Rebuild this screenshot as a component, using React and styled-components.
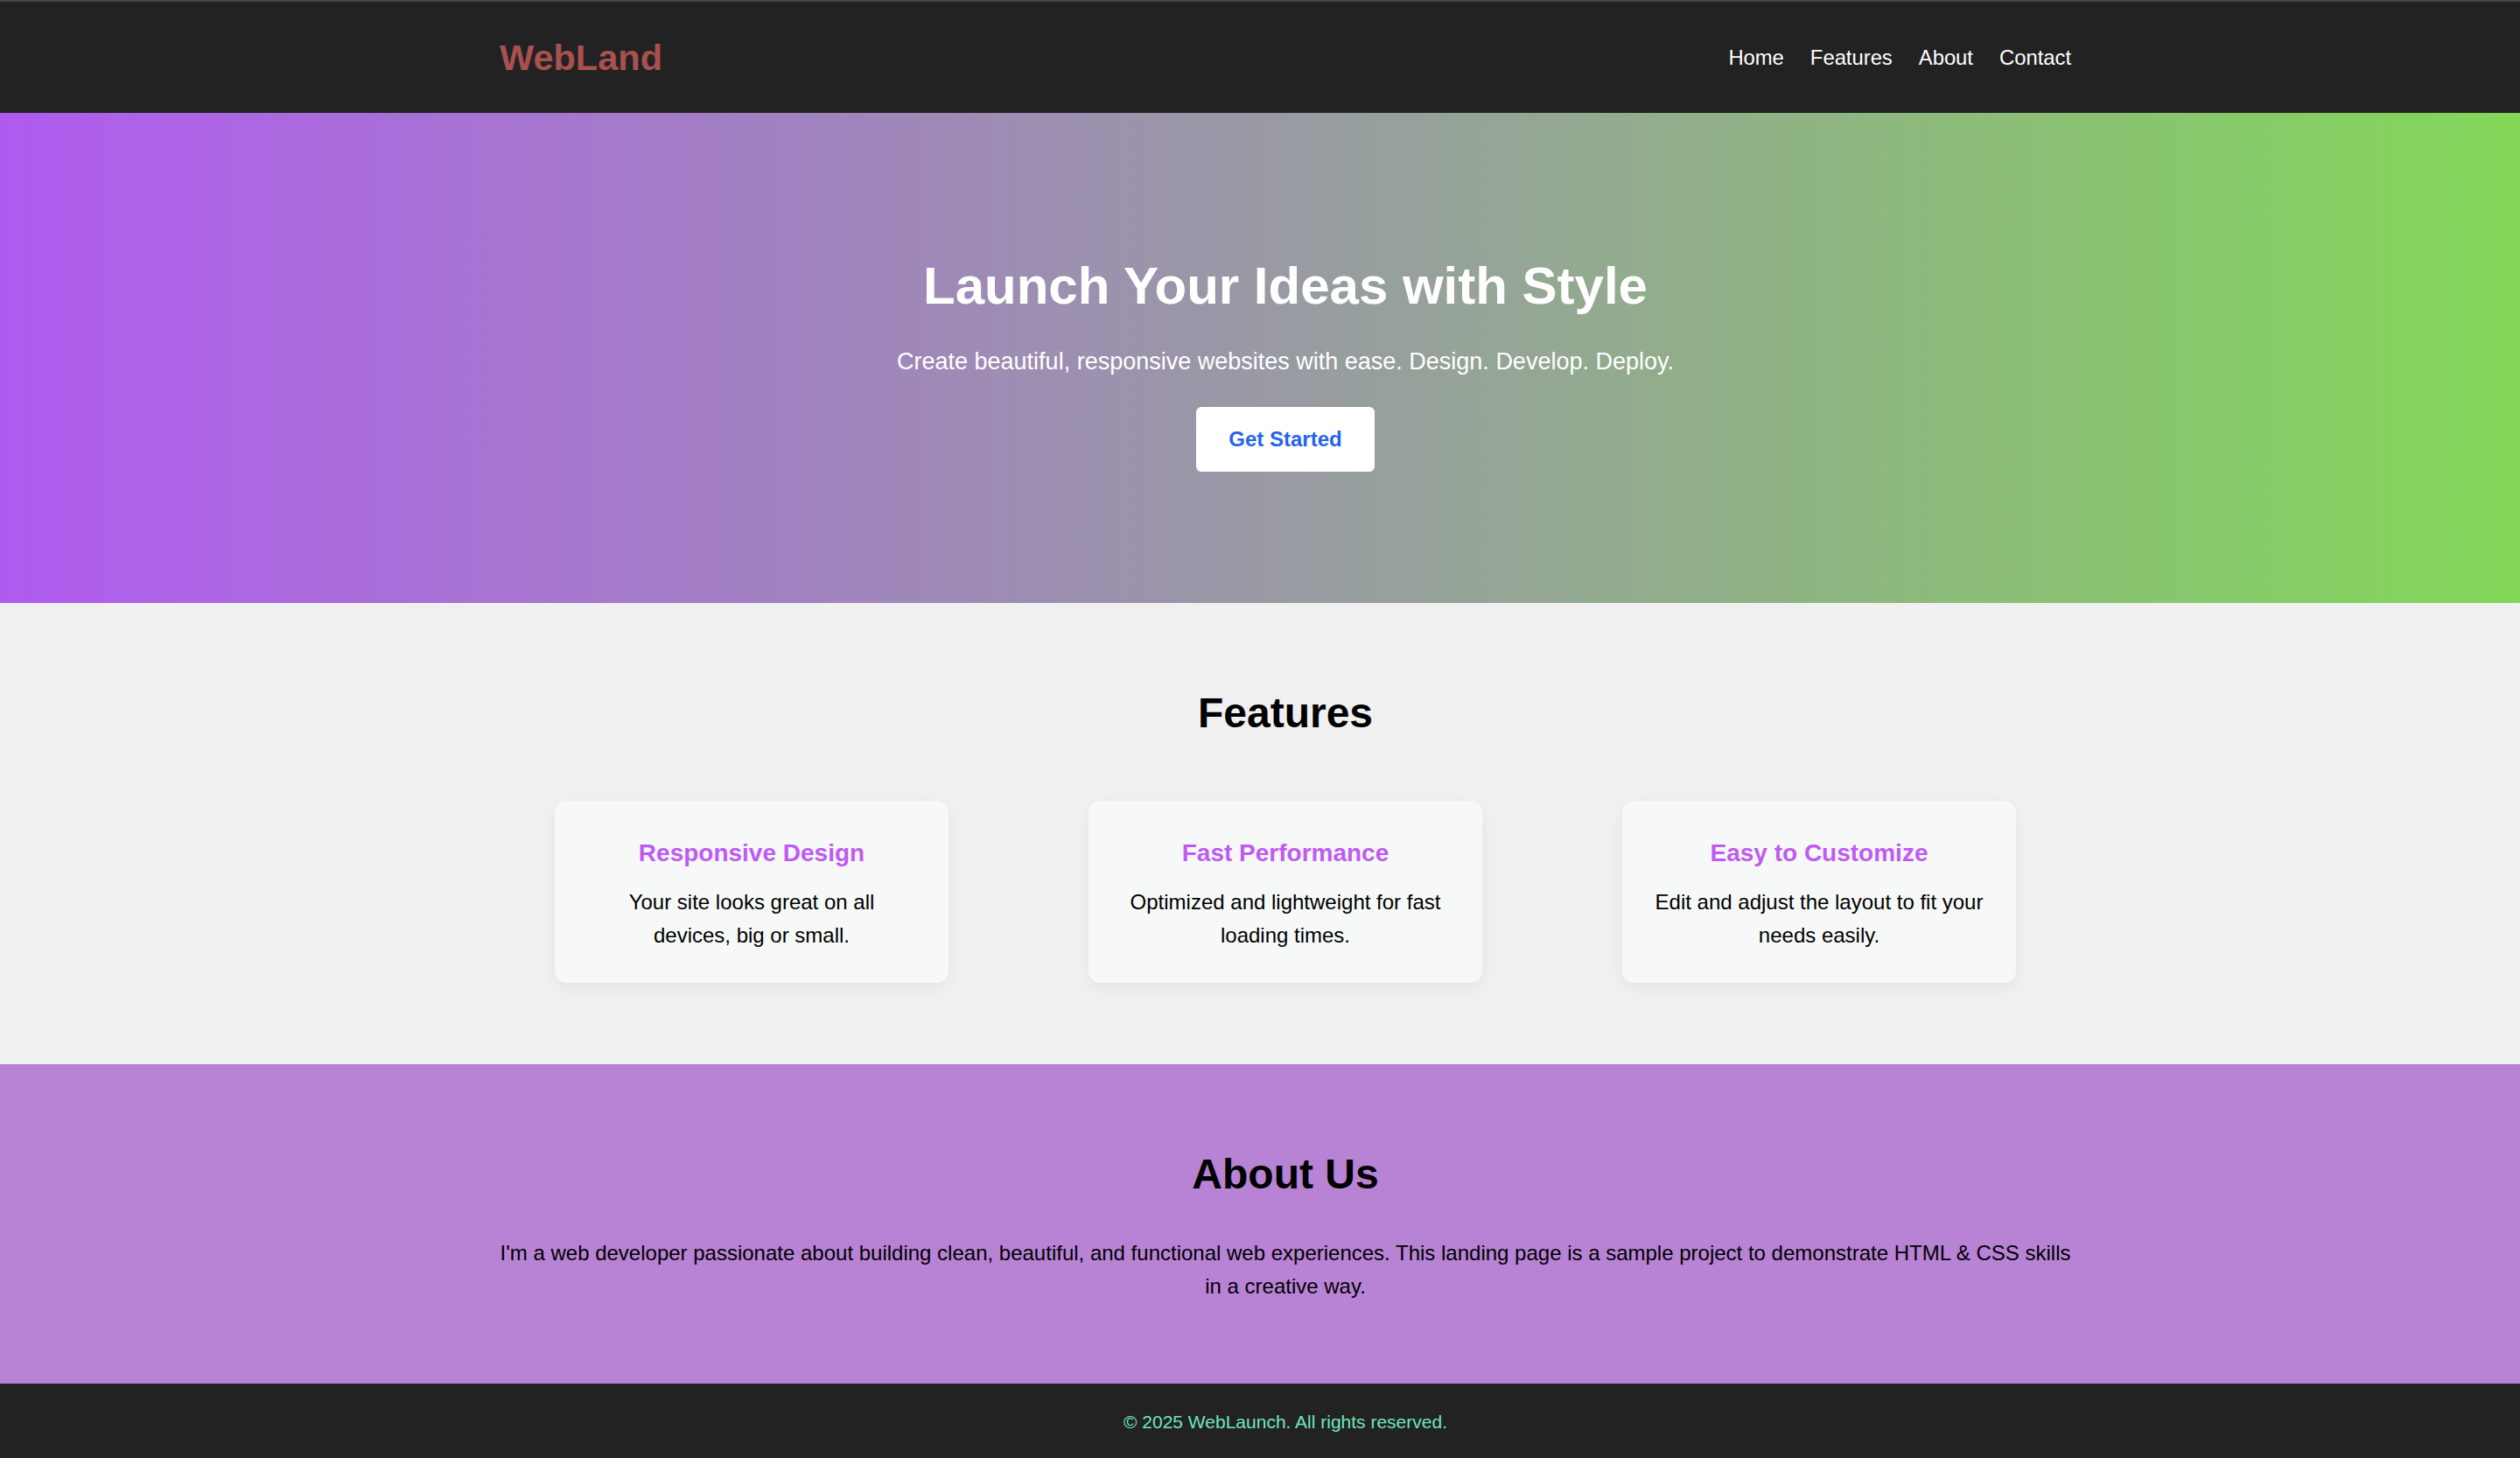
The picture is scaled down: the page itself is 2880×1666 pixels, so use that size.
import React from "react";
import styled, { createGlobalStyle } from "styled-components";

const GlobalStyle = createGlobalStyle`
  html, body {
    margin: 0;
    padding: 0;
    overflow-x: hidden;
  }
  body {
    font-family: "Liberation Sans", Arial, Helvetica, sans-serif;
    color: #000;
    background: #f0f0f0;
  }
  * {
    box-sizing: border-box;
  }
`;

// lines are kept as in the design so the wrap matches
const features = [
  {
    title: "Responsive Design",
    lines: ["Your site looks great on all", "devices, big or small."],
  },
  {
    title: "Fast Performance",
    lines: ["Optimized and lightweight for fast", "loading times."],
  },
  {
    title: "Easy to Customize",
    lines: ["Edit and adjust the layout to fit your", "needs easily."],
  },
];

const navLinks = ["Home", "Features", "About", "Contact"];

const App = () => {
  return (
    <Page>
      <GlobalStyle />
      <Header>
        <Container>
          <Bar>
            <Logo>WebLand</Logo>
            <NavList>
              {navLinks.map(link => (
                <li key={link}>
                  <NavLink href={`#${link.toLowerCase()}`}>{link}</NavLink>
                </li>
              ))}
            </NavList>
          </Bar>
        </Container>
      </Header>

      <Hero id="home">
        <HeroTitle>Launch Your Ideas with Style</HeroTitle>
        <HeroText>
          Create beautiful, responsive websites with ease. Design. Develop.
          Deploy.
        </HeroText>
        <CtaButton href="#features">Get Started</CtaButton>
      </Hero>

      <FeaturesSection id="features">
        <SectionTitle $gap={73}>Features</SectionTitle>
        <CardRow>
          {features.map(f => (
            <Card key={f.title}>
              <CardTitle>{f.title}</CardTitle>
              <CardText>
                {f.lines.map(line => (
                  <span key={line}>{line} </span>
                ))}
              </CardText>
            </Card>
          ))}
        </CardRow>
      </FeaturesSection>

      <AboutSection id="about">
        <Container>
          <SectionTitle $gap={44}>About Us</SectionTitle>
          <AboutText>
            I'm a web developer passionate about building clean, beautiful, and
            functional web experiences. This landing page is a sample project to
            demonstrate HTML &amp; CSS skills in a creative way.
          </AboutText>
        </Container>
      </AboutSection>

      <Footer id="contact">
        <p>&copy; 2025 WebLaunch. All rights reserved.</p>
      </Footer>
    </Page>
  );
};

export default App;

const Page = styled.div`
  width: 2938px;
`;

const Container = styled.div`
  width: 1800px;
  margin: 0 auto;
`;

const Header = styled.header`
  background: #222222;
  border-top: 2px solid #47464b;
`;

const Bar = styled.nav`
  height: 127px;
  display: flex;
  align-items: center;
  justify-content: space-between;
  padding: 0 2px;
`;

const Logo = styled.h1`
  margin: 0;
  font-size: 41.5px;
  font-weight: 700;
  color: #a9514f;
`;

const NavList = styled.ul`
  list-style: none;
  display: flex;
  gap: 30px;
  margin: 0;
  padding: 0;
`;

const NavLink = styled.a`
  color: #fff;
  text-decoration: none;
  font-size: 23.8px;
`;

const Hero = styled.section`
  background: linear-gradient(to right, #b05bf0, #81da55);
  color: #fff;
  text-align: center;
  padding: 150px 0;
`;

const HeroTitle = styled.h2`
  margin: 13px 0 37px;
  font-size: 60px;
  font-weight: 700;
`;

const HeroText = styled.p`
  margin: 0 0 36px;
  font-size: 27px;
`;

const CtaButton = styled.a`
  display: inline-block;
  background: #fff;
  color: #2563eb;
  font-weight: 700;
  font-size: 24px;
  text-decoration: none;
  padding: 23px 37px;
  border-radius: 6px;
`;

const FeaturesSection = styled.section`
  background: #f0f0f0;
  padding: 98px 0 93px;
  text-align: center;
`;

const SectionTitle = styled.h2`
  margin: 0 0 ${props => props.$gap}px;
  font-size: 48px;
  font-weight: 700;
  text-align: center;
`;

const CardRow = styled.div`
  display: flex;
  justify-content: center;
  gap: 160px;
`;

const Card = styled.div`
  width: 450px;
  background: #f7f9f9;
  border-radius: 14px;
  padding: 44px 30px 34px;
  box-shadow: 0 6px 18px rgba(0, 0, 0, 0.05);
`;

const CardTitle = styled.h3`
  margin: 0 0 21px;
  font-size: 28px;
  font-weight: 700;
  color: #bf5af2;
`;

const CardText = styled.p`
  margin: 0;
  font-size: 24px;
  line-height: 1.6;

  span {
    display: block;
    white-space: nowrap;
  }
`;

const AboutSection = styled.section`
  background: #b882d5;
  padding: 98px 0 91px;
`;

const AboutText = styled.p`
  margin: 0;
  font-size: 24px;
  line-height: 1.6;
  text-align: center;
`;

const Footer = styled.footer`
  background: #222222;
  height: 86px;
  display: flex;
  align-items: center;
  justify-content: center;

  p {
    margin: 0;
    color: #6ee7b7;
    font-size: 21px;
    padding-top: 2px;
  }
`;
